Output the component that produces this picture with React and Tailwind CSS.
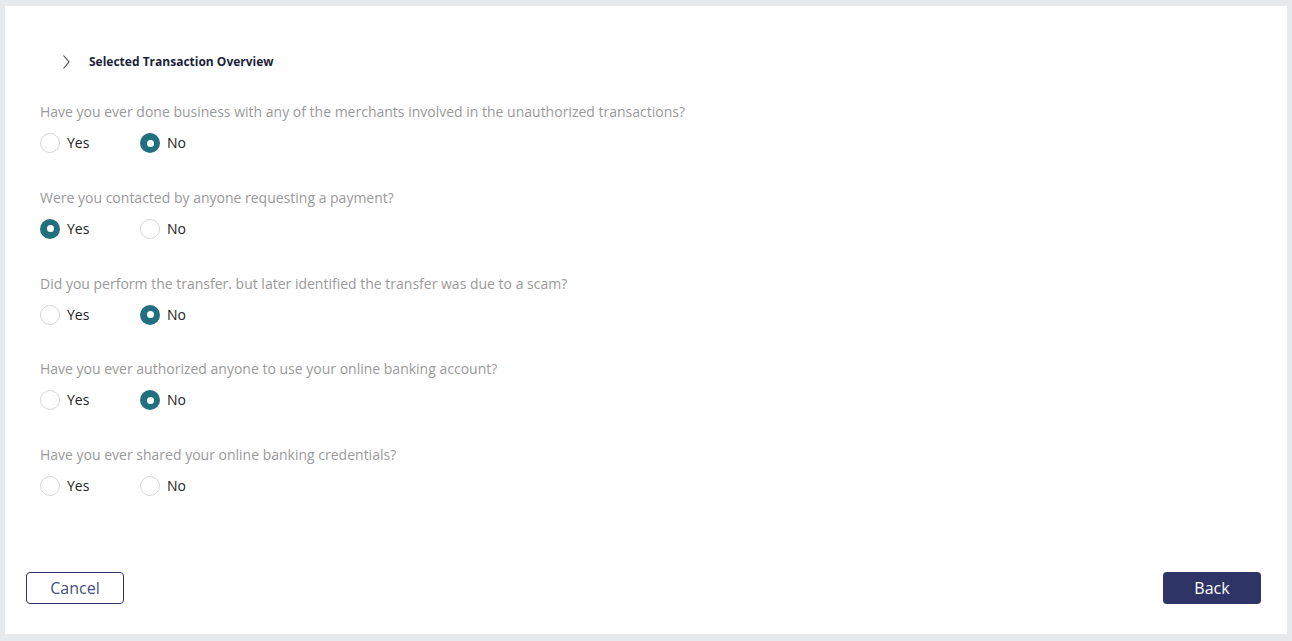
import React, { useState } from 'react';

const questions = [
  { id: 'q1', text: 'Have you ever done business with any of the merchants involved in the unauthorized transactions?', value: 'no' },
  { id: 'q2', text: 'Were you contacted by anyone requesting a payment?', value: 'yes' },
  { id: 'q3', text: 'Did you perform the transfer. but later identified the transfer was due to a scam?', value: 'no' },
  { id: 'q4', text: 'Have you ever authorized anyone to use your online banking account?', value: 'no' },
  { id: 'q5', text: 'Have you ever shared your online banking credentials?', value: null },
];

const Radio = ({ checked, label, onClick }) => (
  <button type="button" onClick={onClick} className="flex items-center h-5 w-[100px] text-left">
    {checked ? (
      <span className="w-5 h-5 rounded-full bg-[#226f80] flex items-center justify-center">
        <span className="w-[7px] h-[7px] rounded-full bg-white"></span>
      </span>
    ) : (
      <span className="w-5 h-5 rounded-full border border-[#d3d7dc] bg-white"></span>
    )}
    <span className="ml-[7px] text-[14px] text-[#222] leading-5">{label}</span>
  </button>
);

const App = () => {
  const [answers, setAnswers] = useState(
    Object.fromEntries(questions.map(q => [q.id, q.value]))
  );

  const setAnswer = (id, v) => setAnswers(prev => ({ ...prev, [id]: v }));

  return (
    <div className="min-h-[641px] bg-[#e6eaed] pt-[6px] pb-[7px] px-[5px]" style={{ fontFamily: '"Open Sans", sans-serif' }}>
      <div className="bg-white h-[628px] flex flex-col">
        {/* Overview header */}
        <div className="flex items-center h-5 mt-[46px] pl-[57px]">
          <svg width="9" height="14" viewBox="0 0 9 14" fill="none" className="text-[#444]">
            <path d="M1.5 0.5 L7 7 L1.5 13.5" stroke="currentColor" strokeWidth="1.1" />
          </svg>
          <span className="ml-[18px] text-[12px] font-bold text-[#1b1f3a]">Selected Transaction Overview</span>
        </div>

        {/* Questions */}
        <div className="pl-[35px] mt-[30px]">
          {questions.map((q, i) => (
            <div key={q.id} className={i > 0 ? 'mt-[34.75px]' : ''}>
              <p className="text-[14px] leading-5 text-[#9a9a9a]">{q.text}</p>
              <div className="flex mt-[11px]">
                <Radio checked={answers[q.id] === 'yes'} label="Yes" onClick={() => setAnswer(q.id, 'yes')} />
                <Radio checked={answers[q.id] === 'no'} label="No" onClick={() => setAnswer(q.id, 'no')} />
              </div>
            </div>
          ))}
        </div>

        {/* Actions */}
        <div className="mt-auto mb-[30px] pl-[21px] pr-[26px] flex justify-between">
          <button className="w-[98px] h-[32px] border border-[#2e3566] rounded-[4px] text-[16px] text-[#46507e]">
            Cancel
          </button>
          <button className="w-[98px] h-[32px] bg-[#2e3566] rounded-[4px] text-[16px] text-white">
            Back
          </button>
        </div>
      </div>
    </div>
  );
};

export default App;
